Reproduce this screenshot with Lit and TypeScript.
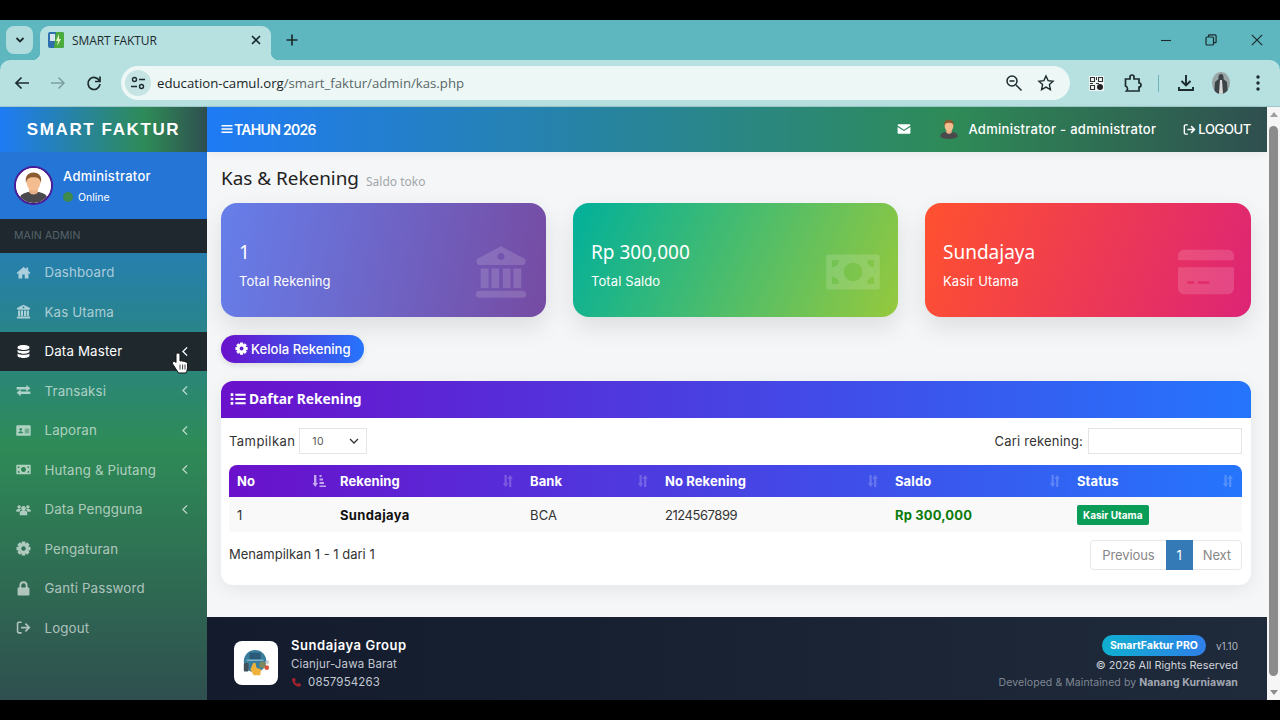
import { LitElement, html, css, svg } from 'lit';
import { customElement } from 'lit/decorators.js';

// gear outline, computed so both the sidebar and the button share it
const gearPath = (() => {
  const pts: string[] = [];
  const teeth = 8;
  for (let i = 0; i < teeth; i++) {
    const a = (i / teeth) * Math.PI * 2;
    const w = 0.24;
    const p = (r: number, t: number) =>
      `${(12 + r * Math.cos(t)).toFixed(2)} ${(12 + r * Math.sin(t)).toFixed(2)}`;
    pts.push(p(8, a - w * 1.7), p(11.5, a - w), p(11.5, a + w), p(8, a + w * 1.7));
  }
  return `M${pts.join('L')}Z M12 8.4a3.6 3.6 0 1 0 .01 0Z`;
})();

const icons: Record<string, unknown> = {
  home: svg`<path d="M12 3 .8 12.6l1.5 1.7L4 12.9V21.5h6V15h4v6.5h6v-8.6l1.7 1.4 1.5-1.7L19.5 9V4h-3v2.4z"/>`,
  bank: svg`<path fill-rule="evenodd" d="M12 1 1.5 6.5v1.2c0 .8.6 1.3 1.3 1.3h18.4c.7 0 1.3-.5 1.3-1.3V6.500zM12 3.900a1.500 1.500 0 1 1-.01 0zM3.300 10.500h3.400v8.500H3.300zM7.900 10.500h3.300v8.500H7.900zM12.800 10.500h3.300v8.500h-3.300zM17.300 10.500h3.400v8.500h-3.400zM2.700 20h18.600a1.500 1.500 0 0 1 1.500 1.500 1.500 1.500 0 0 1-1.500 1.500H2.700a1.500 1.500 0 0 1-1.500-1.500A1.500 1.500 0 0 1 2.700 20z"/>`,
  database: svg`<path d="M12 1.500c-5.200 0-9.500 1.500-9.500 3.600v1c0 2.100 4.300 3.600 9.500 3.600s9.500-1.500 9.500-3.600v-1c0-2.100-4.300-3.600-9.500-3.600zM2.500 9v3c0 2.100 4.300 3.600 9.500 3.600s9.500-1.500 9.500-3.600V9c-2 1.600-5.600 2.300-9.500 2.300S4.500 10.600 2.500 9zM2.500 15v3.900c0 2.100 4.300 3.600 9.500 3.600s9.500-1.500 9.500-3.600V15c-2 1.600-5.600 2.300-9.500 2.300S4.500 16.600 2.500 15z"/>`,
  exchange: svg`<path d="M1 6.500h15.500V3L23 8.500 16.500 14v-3.500H1zM23 13.500H7.500V10L1 15.500 7.500 21v-3.500H23z"/>`,
  idcard: svg`<path fill-rule="evenodd" d="M2 3.500h20a1.500 1.500 0 0 1 1.500 1.500v14a1.500 1.500 0 0 1-1.500 1.500H2A1.500 1.500 0 0 1 .5 19V5A1.500 1.500 0 0 1 2 3.500zM7.500 8a2.200 2.200 0 1 0 .01 0zM3.500 16.500h8c0-2-1.800-3.200-4-3.200s-4 1.200-4 3.200zM14 9v1.500h7V9zM14 12v1.500h7V12zM14 15v1.500h7V15z"/>`,
  money: svg`<path fill-rule="evenodd" d="M1.500 4.500h21a1 1 0 0 1 1 1v13a1 1 0 0 1-1 1h-21a1 1 0 0 1-1-1v-13a1 1 0 0 1 1-1zM12 8a4 4 0 1 0 .01 0zM3 7v3a3 3 0 0 0 3-3zM18 7a3 3 0 0 0 3 3V7zM3 14v3h3a3 3 0 0 0-3-3zM21 14a3 3 0 0 0-3 3h3z"/>`,
  users: svg`<path d="M12 6.500a3.700 3.700 0 1 1-.01 0zM5 5a2.700 2.700 0 1 1-.01 0zM19 5a2.700 2.700 0 1 1-.01 0zM6 21v-3.500c0-2.500 2-4 4-4h4c2 0 4 1.500 4 4V21zM0 15c0-2.500 1.500-4 3.500-4h3c.6 0 1.200.2 1.700.5A5.500 5.500 0 0 0 6 15.500zM24 15c0-2.500-1.500-4-3.500-4h-3c-.6 0-1.200.2-1.700.5a5.500 5.500 0 0 1 2.200 4z"/>`,
  cog: svg`<path fill-rule="evenodd" d="${gearPath}"/>`,
  lock: svg`<path d="M4 10.500h16a1.500 1.500 0 0 1 1.500 1.500v9.500a1.500 1.500 0 0 1-1.500 1.500H4a1.500 1.500 0 0 1-1.500-1.500V12A1.500 1.500 0 0 1 4 10.500z"/><path d="M7 11V7a5 5 0 0 1 10 0v4" fill="none" stroke="currentColor" stroke-width="3"/>`,
  signout: svg`<path d="M9 3.500H4.500a2 2 0 0 0-2 2v13a2 2 0 0 0 2 2H9" fill="none" stroke="currentColor" stroke-width="2.6"/><path d="M8 12h13M15 5.800l6.200 6.200-6.200 6.200" fill="none" stroke="currentColor" stroke-width="2.8"/>`,
  chevron: svg`<path d="M15.500 3 6.500 12l9 9" fill="none" stroke="currentColor" stroke-width="3"/>`,
  bars: svg`<path d="M1 4h22v3H1zM1 10.500h22v3H1zM1 17h22v3H1z"/>`,
  list: svg`<path d="M1 3.500h4v4H1zM1 10h4v4H1zM1 16.500h4v4H1zM8 4h15.500v3H8zM8 10.500h15.500v3H8zM8 17h15.500v3H8z"/>`,
  envelope: svg`<path d="M2.500 4h19A1.500 1.500 0 0 1 23 5.500v.7l-11 7-11-7v-.7A1.500 1.500 0 0 1 2.500 4zM1 8.600V18.500A1.500 1.500 0 0 0 2.500 20h19a1.500 1.500 0 0 0 1.500-1.500V8.600l-11 7z"/>`,
  card: svg`<path d="M2.500 2.500h19A2.500 2.500 0 0 1 24 5v2H0V5a2.500 2.500 0 0 1 2.500-2.500z"/><path fill-rule="evenodd" d="M0 10h24v9a2.500 2.500 0 0 1-2.500 2.500h-19A2.500 2.500 0 0 1 0 19zM4 16v1h3v-1zM8.500 16v1h5v-1z"/>`,
  phone: svg`<path d="M5 2 9 2.500l1.500 5-2.500 2c1 2.500 3.500 5 6 6l2-2.500 5 1.500.5 4c-.3 1.500-1.500 2.500-3 2.500C9.500 21 3 14.500 2.500 5 2.500 3.500 3.500 2.300 5 2z"/>`,
};

const ic = (name: string) =>
  html`<svg class="ic" viewBox="0 0 24 24" fill="currentColor">${icons[name]}</svg>`;

const menu = [
  { label: 'Dashboard', icon: 'home' },
  { label: 'Kas Utama', icon: 'bank' },
  { label: 'Data Master', icon: 'database', active: true, more: true },
  { label: 'Transaksi', icon: 'exchange', more: true },
  { label: 'Laporan', icon: 'idcard', more: true },
  { label: 'Hutang & Piutang', icon: 'money', more: true },
  { label: 'Data Pengguna', icon: 'users', more: true },
  { label: 'Pengaturan', icon: 'cog' },
  { label: 'Ganti Password', icon: 'lock' },
  { label: 'Logout', icon: 'signout' },
];

const stats = [
  { value: '1', label: 'Total Rekening', icon: 'bank', tone: 'violet' },
  { value: 'Rp 300,000', label: 'Total Saldo', icon: 'money', tone: 'green' },
  { value: 'Sundajaya', label: 'Kasir Utama', icon: 'card', tone: 'red' },
];

const columns = [
  { label: 'No', width: 103, on: true },
  { label: 'Rekening', width: 190 },
  { label: 'Bank', width: 135 },
  { label: 'No Rekening', width: 230 },
  { label: 'Saldo', width: 182 },
  { label: 'Status', width: 173 },
];

const sortIcon = (on = false) => html`<svg class="sort ${on ? 'on' : ''}" viewBox="0 0 14 14" fill="currentColor">
  ${on
    ? svg`<path d="M2 1h2.400v8H6l-2.800 4L.5 9H2zM7.500 1h2v2h-2zM7.500 4.500h3.500v2H7.500zM7.500 8H12v2H7.500zM7.500 11.500H14V13H7.500z"/>`
    : svg`<path d="M2.500 1h2.200v8.200h1.800L3.600 13 .8 9.200h1.700zM9.300 13h-2.200V4.800H5.300L8.200 1 11 4.800H9.300z"/>`}
</svg>`;

const person = (bg: boolean) => html`<svg viewBox="0 0 40 40">
  ${bg ? svg`<circle cx="20" cy="20" r="20" fill="#fff"/>` : ''}
  <path d="M4 36c0-7 7-9 16-9s16 2 16 9c-4 3-10 4-16 4S8 39 4 36z" fill="#4a4a4c"/>
  <path d="M15 22h10v6c-2 3-8 3-10 0z" fill="#e8b088"/>
  <ellipse cx="20" cy="16" rx="8" ry="10" fill="#f3bd90"/>
  <path d="M11.500 17C10 9 14 5 20 5s10 4 8.500 12c-1-5-3-6.500-8.500-6.500S12.500 12 11.500 17z" fill="#8a5a30"/>
</svg>`;

@customElement('app-root')
export class AppRoot extends LitElement {
  static styles = css`
    :host {
      display: block;
      width: 1280px;
      height: 720px;
      overflow: hidden;
      background: #000;
      padding: 20px 0;
      box-sizing: border-box;
      font-family: 'Inter', 'Liberation Sans', sans-serif;
      color: #222;
    }
    .ic { width: 1em; height: 1em; display: block; flex: none; }

    /* browser chrome */
    .chrome { background: #5eb6bf; }
    .strip {
      height: 40px;
      display: flex;
      align-items: flex-end;
      padding-left: 6px;
      color: #1c2b2d;
    }
    .tab-list {
      width: 27px;
      height: 28px;
      margin-bottom: 6px;
      background: #b0dcde;
      border-radius: 8px;
      display: flex;
      align-items: center;
      justify-content: center;
    }
    .tab {
      position: relative;
      width: 231px;
      height: 34px;
      margin-left: 7px;
      background: #b7e0e1;
      border-radius: 9px 9px 0 0;
      display: flex;
      align-items: center;
      gap: 8px;
      padding: 0 10px 6px 8px;
      box-sizing: border-box;
      font: 12px 'Open Sans', sans-serif;
    }
    .tab::before, .tab::after {
      content: '';
      position: absolute;
      bottom: 0;
      width: 8px;
      height: 8px;
    }
    .tab::before { left: -8px; background: radial-gradient(circle at 0 0, transparent 8px, #b7e0e1 8.5px); }
    .tab::after { right: -8px; background: radial-gradient(circle at 100% 0, transparent 8px, #b7e0e1 8.5px); }
    .tab-title { flex: 1; letter-spacing: -0.1px; }
    .plus { margin: 0 0 11px 15px; height: 18px; }
    .win {
      margin: 0 17px 14px auto;
      display: flex;
      gap: 34px;
      align-items: center;
    }
    .toolbar {
      height: 47px;
      background: #b7e0e1;
      border-radius: 10px 10px 0 0;
      border-bottom: 1px solid #9ec8c8;
      box-sizing: border-box;
      display: flex;
      align-items: flex-start;
      padding: 6px 12px 0 12px;
      color: #1c2b2d;
    }
    .nav { display: flex; gap: 16px; width: 109px; height: 34px; align-items: center; }
    .omni {
      width: 949px;
      height: 34px;
      background: #edf7f6;
      border-radius: 17px;
      display: flex;
      align-items: center;
      padding: 0 15px 0 4px;
      box-sizing: border-box;
      font: 13.2px 'Open Sans', sans-serif;
    }
    .site {
      width: 26px;
      height: 26px;
      border-radius: 50%;
      background: #c6e4e4;
      display: flex;
      align-items: center;
      justify-content: center;
      margin-right: 6px;
    }
    .omni b { font-weight: 400; color: #1a2526; }
    .omni span { color: #5a6768; }
    .omni-end { margin-left: auto; display: flex; gap: 14px; align-items: center; }
    .tools {
      height: 34px;
      display: flex;
      align-items: center;
      margin-left: 19px;
      gap: 17px;
    }
    .t-ext { margin-left: 2px; }
    .t-dots { margin-left: 9px; }
    .tsep { width: 1px; height: 17px; background: #6fb3bb; margin: 0 1px 0 -2px; }
    .me { width: 18px; height: 22px; border-radius: 50%; background: #9aa5a6; overflow: hidden; }

    /* page */
    .page { height: 593px; display: flex; position: relative; background: #f4f6f8; }
    .scroll {
      width: 13px;
      background: #f6f6f6;
      display: flex;
      flex-direction: column;
      align-items: center;
      flex: none;
      padding-top: 5px;
      box-sizing: border-box;
    }
    .tri-up { width: 0; height: 0; border: 4px solid transparent; border-top: 0; border-bottom: 5px solid #a0a0a0; }
    .tri-down { width: 0; height: 0; border: 4px solid transparent; border-bottom: 0; border-top: 5px solid #8c8c8c; margin-top: 14px; }
    .thumb { width: 9px; height: 550px; border-radius: 5px; background: #8b8b8b; margin-top: 9px; }

    aside {
      width: 207px;
      flex: none;
      display: flex;
      flex-direction: column;
      background: linear-gradient(180deg, #1f76f0 0%, #2e8b57 57%, #2f4f4f 100%);
      color: #fff;
    }
    .brand {
      height: 45px;
      display: flex;
      align-items: center;
      justify-content: center;
      font: 700 17px 'Liberation Sans', sans-serif;
      letter-spacing: 1.6px;
      background: linear-gradient(90deg, #1f7bf5 0%, #2e8b57 70%, #2f4f4f 100%);
    }
    .user {
      height: 67px;
      display: flex;
      align-items: center;
      gap: 10px;
      padding-left: 14px;
      background: #2575d6;
      box-sizing: border-box;
    }
    .avatar {
      width: 39px;
      height: 39px;
      border-radius: 50%;
      border: 2px solid #4a1c96;
      box-sizing: border-box;
      overflow: hidden;
      flex: none;
      background: #fff;
    }
    .uname { font-size: 13px; font-weight: 500; letter-spacing: 0.3px; }
    .online { display: flex; align-items: center; gap: 5px; font-size: 10.5px; margin-top: 7px; }
    .dot { width: 10px; height: 10px; border-radius: 50%; background: #3d8a4a; }
    .section {
      height: 33.5px;
      background: #1e282e;
      color: #56646b;
      display: flex;
      align-items: center;
      padding-left: 14px;
      font-size: 10.5px;
      letter-spacing: 0.1px;
    }
    nav { display: flex; flex-direction: column; }
    .item {
      height: 39.5px;
      display: flex;
      align-items: center;
      padding: 0 16px 0 16px;
      color: rgba(255, 255, 255, 0.62);
      font-size: 13.3px;
      letter-spacing: 0.15px;
    }
    .item .icon { width: 28.5px; font-size: 15px; }
    .item .chev { margin-left: auto; font-size: 11px; color: rgba(255, 255, 255, 0.68); }
    .item.active { background: #1e282d; color: #fff; }
    .item.active .chev { color: #fff; }

    .main { width: 1060px; flex: none; display: flex; flex-direction: column; }
    .top {
      height: 45px;
      flex: none;
      display: flex;
      align-items: center;
      color: #fff;
      padding: 0 16px 1px 14px;
      box-sizing: border-box;
      background: linear-gradient(90deg, #1f7bf5 0%, #2e8b57 70%, #2f4f4f 100%);
      font-size: 13px;
      font-weight: 500;
      box-shadow: 0 2px 8px rgba(0, 0, 0, 0.06);
    }
    .year { display: flex; align-items: center; gap: 1px; font-size: 14px; font-weight: 600; letter-spacing: -0.7px; }
    .year .ic { font-size: 12px; }
    .top-right { margin-left: auto; display: flex; align-items: center; }
    .mail { font-size: 14px; margin-right: 27px; }
    .top-av { width: 22px; height: 24px; margin-right: 8px; }
    .who { letter-spacing: 0.3px; margin-right: 27px; }
    .out { display: flex; align-items: center; gap: 2px; letter-spacing: -0.35px; }

    .content { flex: 1; padding: 12px 16px 0 14px; box-sizing: border-box; min-height: 0; }
    .head { display: flex; align-items: center; gap: 7px; height: 34px; }
    h1 { margin: 0 0 6px; font: 400 18.9px 'Noto Sans', sans-serif; color: #222; }
    .head small { font: 12px 'Noto Sans', sans-serif; color: #a2a6a9; }
    .stats { display: grid; grid-template-columns: 325px 325px 326px; gap: 27px; margin-top: 5px; }
    .stat {
      height: 114px;
      border-radius: 16px;
      color: #fff;
      display: flex;
      align-items: center;
      justify-content: space-between;
      padding: 0 18px;
      box-sizing: border-box;
      box-shadow: 0 10px 24px rgba(0, 0, 0, 0.1);
    }
    .violet { background: linear-gradient(100deg, #667eea, #764ba2); }
    .green { background: linear-gradient(115deg, #00b09b, #96c93d); }
    .red { background: linear-gradient(110deg, #ff512f, #dd2476); }
    .stat-text { margin-top: 6px; }
    .val { font: 400 19px 'Noto Sans', sans-serif; position: relative; top: 1px; }
    .lab { font-size: 13px; margin-top: 9px; letter-spacing: 0.1px; }
    .stat .ic { font-size: 56px; color: rgba(255, 255, 255, 0.15); margin: 24px -1px 0 0; }
    .btn {
      display: inline-flex;
      align-items: center;
      gap: 3px;
      height: 28px;
      margin-top: 18px;
      padding: 0 13px 0 14px;
      border-radius: 14px;
      color: #fff;
      font-size: 13.1px;
      font-weight: 500;
      background: linear-gradient(90deg, #6a11cb, #2575fc);
      box-shadow: 0 2px 6px rgba(0, 0, 0, 0.12);
    }
    .panel {
      margin-top: 18px;
      background: #fff;
      border-radius: 12px;
      height: 204px;
      overflow: hidden;
      box-shadow: 0 4px 18px rgba(0, 0, 0, 0.07);
    }
    .panel-head {
      height: 37px;
      display: flex;
      align-items: center;
      gap: 3px;
      padding: 0 0 2px 9px;
      box-sizing: border-box;
      color: #fff;
      font: 700 13.8px 'Noto Sans', sans-serif;
      background: linear-gradient(90deg, #6a11cb, #2575fc);
    }
    .panel-head .ic { font-size: 16px; }
    .panel-body { padding: 10px 9px 0 8px; }
    .filters { display: flex; justify-content: space-between; align-items: center; height: 26px; font-size: 13px; letter-spacing: 0.2px; color: #333; }
    .filters label { display: flex; align-items: center; gap: 3px; }
    .filters label:first-child { letter-spacing: 0.42px; gap: 4px; }
    .sel {
      width: 68px;
      height: 26px;
      border: 1px solid #e2e5e8;
      box-sizing: border-box;
      display: flex;
      align-items: center;
      justify-content: space-between;
      padding: 0 7px 0 12px;
      font-size: 10.5px;
      color: #555;
    }
    .search { width: 154px; height: 26px; border: 1px solid #e2e5e8; box-sizing: border-box; margin-left: 2px; }
    table { width: 1013px; table-layout: fixed; border-collapse: separate; border-spacing: 0; margin-top: 11px; font-size: 13px; }
    thead tr { background: linear-gradient(90deg, #6a11cb, #2575fc); color: #fff; }
    th { height: 32px; padding: 0 6px 0 8px; font-weight: 700; text-align: left; }
    th:first-child { border-top-left-radius: 8px; }
    th:last-child { border-top-right-radius: 8px; }
    .th { display: flex; align-items: center; justify-content: space-between; letter-spacing: 0.1px; }
    .sort { width: 14px; height: 14px; color: rgba(255, 255, 255, 0.22); display: block; }
    .sort.on { color: rgba(255, 255, 255, 0.62); }
    td { height: 35px; padding: 0 8px; background: #f9f9f9; color: #333; letter-spacing: 0.15px; }
    .strong { font-weight: 700; color: #111; letter-spacing: 0.35px; }
    .digits { letter-spacing: -0.45px; }
    .money { font-weight: 700; color: #0a7a0a; font-size: 13px; }
    .badge {
      display: inline-block;
      padding: 4px 6px;
      border-radius: 2px;
      background: #0a9d58;
      color: #fff;
      font-size: 10px;
      font-weight: 700;
      letter-spacing: 0;
    }
    .foot { display: flex; justify-content: space-between; align-items: center; margin-top: 8px; font-size: 13px; color: #333; }
    .foot > span { margin-top: -2px; }
    .pager { display: flex; height: 30px; border: 1px solid #e6e8ea; border-radius: 4px; font-size: 13px; color: #888; box-sizing: border-box; letter-spacing: -0.1px; }
    .pager span { padding: 0 10px; display: flex; align-items: center; }
    .pager span:first-child { padding: 0 11px; }
    .pager .cur { background: #337ab7; color: #fff; padding: 0 11px; margin: -1px 0; }

    footer {
      height: 83px;
      flex: none;
      background: linear-gradient(90deg, #131b2d, #1f2a3a);
      display: flex;
      align-items: center;
      justify-content: space-between;
      padding: 9px 29px 0 27px;
      box-sizing: border-box;
      color: #fff;
    }
    .org { display: flex; align-items: center; gap: 13px; }
    .logo { width: 44px; height: 44px; border-radius: 8px; background: #fff; display: flex; align-items: center; justify-content: center; }
    .org-name { font-size: 13px; font-weight: 600; letter-spacing: 0.55px; }
    .org-sub { font-size: 11.5px; color: #c3c8d0; margin-top: 4px; letter-spacing: 0.15px; }
    .tel { display: flex; align-items: center; gap: 6px; }
    .tel .ic { color: #a3232c; font-size: 11px; }
    .legal { text-align: right; font-size: 10.9px; color: #d0d4da; margin-top: -2px; }
    .legal-top { display: flex; justify-content: flex-end; align-items: center; gap: 10px; font-size: 10px; color: #aeb4bc; }
    .pill { height: 21px; padding: 0 8px; border-radius: 11px; display: flex; align-items: center; font-size: 10.5px; font-weight: 700; color: #fff; background: linear-gradient(90deg, #0fb0d0, #2f7fe8); }
    .legal-mid { margin-top: 2px; }
    .legal-end { margin-top: 4px; font-size: 10.5px; color: #7f8793; letter-spacing: 0.08px; }
    .legal-end b { color: #a2a8b2; }

    .cursor { position: absolute; left: 172px; top: 245px; width: 16px; height: 22px; }
  `;

  render() {
    return html`
      <div class="chrome">
        <div class="strip">
          <div class="tab-list">
            <svg width="10" height="10" viewBox="0 0 10 10"><path d="M1.5 3 5 6.5 8.5 3" fill="none" stroke="#1c2b2d" stroke-width="1.8"/></svg>
          </div>
          <div class="tab">
            <svg width="16" height="16" viewBox="0 0 16 16" style="flex:none">
              <rect width="16" height="16" rx="2" fill="#2f6fb0"/>
              <path d="M8 0h6a2 2 0 0 1 2 2v12a2 2 0 0 1-2 2H6z" fill="#4bab3c"/>
              <rect x="2" y="2" width="5" height="7" fill="#d7e6ef"/>
              <path d="M11 2 8 9h2l-1 5 4-7h-2z" fill="#e8f3c8"/>
            </svg>
            <span class="tab-title">SMART FAKTUR</span>
            <svg width="10" height="10" viewBox="0 0 10 10"><path d="M1 1l8 8M9 1 1 9" stroke="#1c2b2d" stroke-width="1.7"/></svg>
          </div>
          <svg class="plus" width="12" height="18" viewBox="0 0 12 18"><path d="M6 3.5v11M.5 9h11" stroke="#1c2b2d" stroke-width="1.7"/></svg>
          <div class="win">
            <svg width="10" height="10" viewBox="0 0 10 10"><path d="M0 5.5h10" stroke="#1c2b2d" stroke-width="1.1"/></svg>
            <svg width="12" height="12" viewBox="0 0 12 12" fill="none" stroke="#1c2b2d" stroke-width="1.2"><rect x="1" y="3" width="7.5" height="8" rx="1"/><path d="M3.5 3V1.5a.8.8 0 0 1 .8-.6h5.800a1 1 0 0 1 1 1v6a.8.8 0 0 1-.8.8H8.500"/></svg>
            <svg width="12" height="12" viewBox="0 0 12 12"><path d="M.8.8l10.400 10.400M11.200.8.8 11.200" stroke="#1c2b2d" stroke-width="1.2"/></svg>
          </div>
        </div>
        <div class="toolbar">
          <div class="nav">
            <svg width="20" height="20" viewBox="0 0 20 20" fill="none" stroke="#1c2b2d" stroke-width="1.7"><path d="M17 10H4M9.500 4.500 4 10l5.500 5.500"/></svg>
            <svg width="20" height="20" viewBox="0 0 20 20" fill="none" stroke="#7d9ea2" stroke-width="1.5"><path d="M3 10h13M10.500 4.500 16 10l-5.500 5.500"/></svg>
            <svg width="20" height="20" viewBox="0 0 20 20" fill="none" stroke="#1c2b2d" stroke-width="1.7"><path d="M15.500 8A6 6 0 1 0 16 11"/><path d="M16 3.500V8.500h-5"/></svg>
          </div>
          <div class="omni">
            <div class="site">
              <svg width="16" height="16" viewBox="0 0 16 16" fill="none" stroke="#1c2b2d" stroke-width="1.4"><circle cx="4.500" cy="4.500" r="2"/><path d="M9 4.500h6M1 11.500h6"/><circle cx="11.500" cy="11.500" r="2"/></svg>
            </div>
            <b>education-camul.org</b><span>/smart_faktur/admin/kas.php</span>
            <div class="omni-end">
              <svg width="18" height="18" viewBox="0 0 18 18" fill="none" stroke="#1c2b2d" stroke-width="1.5"><circle cx="7" cy="7" r="5"/><path d="M4.500 7h5M11 11l5.500 5.500"/></svg>
              <svg width="18" height="18" viewBox="0 0 18 18" fill="none" stroke="#1c2b2d" stroke-width="1.4"><path d="M9 2l2.100 4.600 5 .6-3.700 3.400 1 5L9 13.100l-4.400 2.500 1-5L1.900 7.200l5-.6z"/></svg>
            </div>
          </div>
          <div class="tools">
            <svg width="15" height="15" viewBox="0 0 15 15"><rect width="15" height="15" fill="#eef5f5"/><path d="M1.500 1.500h4v4h-4zM9.500 1.500h4v4h-4zM1.500 9.500h4v4h-4z" fill="none" stroke="#333" stroke-width="1.1"/><path d="M7 1h1v3H7zM7 7h3v1H7zM1 7h3v1H1z" fill="#333"/><circle cx="11" cy="11" r="3" fill="#222"/></svg>
            <svg class="t-ext" width="20" height="20" viewBox="0 0 20 20" fill="none" stroke="#1c2b2d" stroke-width="1.7"><path d="M3 6h4V4a2 2 0 0 1 4 0v2h5v4a2 2 0 0 1 0 4v4H3.500c1.500-1.500 1.500-4-1-5V6z"/></svg>
            <div class="tsep"></div>
            <svg width="18" height="20" viewBox="0 0 18 20" fill="none" stroke="#1c2b2d" stroke-width="1.9"><path d="M9 2v10M4.500 8 9 12.500 13.500 8M2 14v3h14v-3"/></svg>
            <div class="me">
              <svg width="18" height="22" viewBox="0 0 18 22"><path d="M9 2c2 0 3 2 2.500 5L15 10l1 12H2l1-12 3.500-3C6 4 7 2 9 2z" fill="#3c4448"/><path d="M8 8h2l1 14H7z" fill="#d8d8d8"/></svg>
            </div>
            <svg class="t-dots" width="4" height="16" viewBox="0 0 4 16" fill="#1c2b2d"><circle cx="2" cy="2" r="1.7"/><circle cx="2" cy="8" r="1.7"/><circle cx="2" cy="14" r="1.7"/></svg>
          </div>
        </div>
      </div>

      <div class="page">
        <aside>
          <div class="brand">SMART FAKTUR</div>
          <div class="user">
            <div class="avatar">${person(true)}</div>
            <div>
              <div class="uname">Administrator</div>
              <div class="online"><span class="dot"></span>Online</div>
            </div>
          </div>
          <div class="section">MAIN ADMIN</div>
          <nav>
            ${menu.map(m => html`
              <div class="item ${m.active ? 'active' : ''}">
                <span class="icon">${ic(m.icon)}</span>
                <span>${m.label}</span>
                ${m.more ? html`<span class="chev">${ic('chevron')}</span>` : ''}
              </div>
            `)}
          </nav>
        </aside>

        <div class="main">
          <div class="top">
            <div class="year">${ic('bars')}TAHUN 2026</div>
            <div class="top-right">
              <span class="mail">${ic('envelope')}</span>
              <span class="top-av">${person(false)}</span>
              <span class="who">Administrator - administrator</span>
              <span class="out">${ic('signout')}LOGOUT</span>
            </div>
          </div>

          <div class="content">
            <div class="head"><h1>Kas &amp; Rekening</h1><small>Saldo toko</small></div>
            <div class="stats">
              ${stats.map(s => html`
                <div class="stat ${s.tone}">
                  <div class="stat-text">
                    <div class="val">${s.value}</div>
                    <div class="lab">${s.label}</div>
                  </div>
                  ${ic(s.icon)}
                </div>
              `)}
            </div>
            <div class="btn">${ic('cog')}Kelola Rekening</div>
            <div class="panel">
              <div class="panel-head">${ic('list')}Daftar Rekening</div>
              <div class="panel-body">
                <div class="filters">
                  <label>Tampilkan
                    <span class="sel">10
                      <svg width="10" height="10" viewBox="0 0 10 10"><path d="M1 3l4 4 4-4" fill="none" stroke="#333" stroke-width="1.3"/></svg>
                    </span>
                  </label>
                  <label>Cari rekening: <span class="search"></span></label>
                </div>
                <table>
                  <colgroup>${columns.map(c => html`<col style="width:${c.width}px" />`)}</colgroup>
                  <thead>
                    <tr>${columns.map(c => html`<th><div class="th">${c.label}${sortIcon(c.on)}</div></th>`)}</tr>
                  </thead>
                  <tbody>
                    <tr>
                      <td>1</td>
                      <td class="strong">Sundajaya</td>
                      <td>BCA</td>
                      <td class="digits">2124567899</td>
                      <td class="money">Rp 300,000</td>
                      <td><span class="badge">Kasir Utama</span></td>
                    </tr>
                  </tbody>
                </table>
                <div class="foot">
                  <span>Menampilkan 1 - 1 dari 1</span>
                  <div class="pager"><span>Previous</span><span class="cur">1</span><span>Next</span></div>
                </div>
              </div>
            </div>
          </div>

          <footer>
            <div class="org">
              <div class="logo">
                <svg width="30" height="30" viewBox="0 0 32 32">
                  <circle cx="15" cy="14" r="12" fill="#3b7d9c"/>
                  <rect x="9" y="5" width="12" height="7" fill="#2a5a78"/>
                  <path d="M6 13h18" stroke="#a8d0e0" stroke-width="1"/>
                  <rect x="3" y="16" width="5" height="9" rx="1" fill="#40505c"/>
                  <path d="M13 16h2.500l1 5 5 2-1 6h-7l-3.500-6z" fill="#efb23a"/>
                  <circle cx="23" cy="18" r="3.500" fill="#7d8a60"/>
                  <circle cx="28" cy="15" r="2" fill="#c9ced0"/>
                  <circle cx="27.500" cy="21" r="2.500" fill="#d9583c"/>
                </svg>
              </div>
              <div>
                <div class="org-name">Sundajaya Group</div>
                <div class="org-sub">Cianjur-Jawa Barat</div>
                <div class="org-sub tel">${ic('phone')}0857954263</div>
              </div>
            </div>
            <div class="legal">
              <div class="legal-top"><span class="pill">SmartFaktur PRO</span>v1.10</div>
              <div class="legal-mid">© 2026 All Rights Reserved</div>
              <div class="legal-end">Developed &amp; Maintained by <b>Nanang Kurniawan</b></div>
            </div>
          </footer>
        </div>

        <div class="scroll">
          <div class="tri-up"></div>
          <div class="thumb"></div>
          <div class="tri-down"></div>
        </div>

        <svg class="cursor" viewBox="0 0 16 22">
          <path d="M6 1c1.200 0 2 .8 2 2v6l.4 0c1-.6 2-.3 2.400.4 1-.5 2-.2 2.400.6 1-.3 2.300.3 2.300 1.700v4c0 2-.8 3.300-1.500 5.300H6.500L1 12.500c-.9-1.100-.6-2.200.2-2.700.8-.5 1.900-.3 2.600.5l.2.2V3c0-1.200.8-2 2-2z" fill="#fff" stroke="#111" stroke-width="1"/>
          <path d="M8 12.500v5M10.600 12.500v5M13 12.500v5" stroke="#111" stroke-width=".8"/>
        </svg>
      </div>
    `;
  }
}

declare global {
  interface HTMLElementTagNameMap {
    'app-root': AppRoot;
  }
}
